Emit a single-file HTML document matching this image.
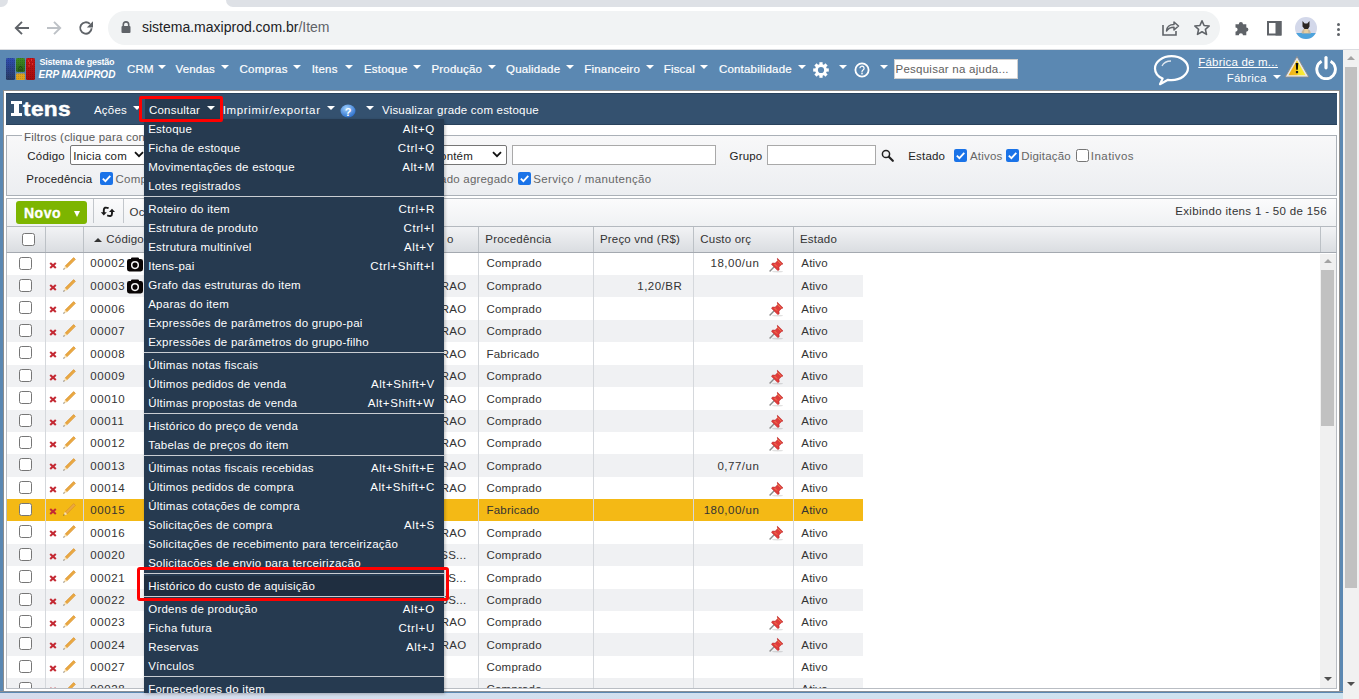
<!DOCTYPE html>
<html><head><meta charset="utf-8"><title>Itens</title>
<style>
html,body{margin:0;padding:0;width:1359px;height:699px;overflow:hidden;background:#fff;position:relative}
.t{position:absolute;white-space:nowrap;font-family:"Liberation Sans",sans-serif}
svg text{font-family:"Liberation Sans",sans-serif}
</style></head><body>
<div style="position:absolute;left:226px;top:0px;width:1133px;height:7px;background:#dee1e6;border-bottom-left-radius:8px"></div>
<div style="position:absolute;left:0px;top:0px;width:8px;height:7px;background:#dee1e6;border-bottom-right-radius:8px"></div>
<div style="position:absolute;left:0px;top:49px;width:1359px;height:1px;background:#dadce0"></div>
<svg style="position:absolute;left:13px;top:19px" width="18" height="18" viewBox="0 0 18 18"><path d="M16 9H3.5M9 2.8L2.8 9L9 15.2" fill="none" stroke="#5f6368" stroke-width="1.9"/></svg>
<svg style="position:absolute;left:45px;top:19px" width="18" height="18" viewBox="0 0 18 18"><path d="M2 9h12.5M9 2.8L15.2 9L9 15.2" fill="none" stroke="#bdc1c6" stroke-width="1.9"/></svg>
<svg style="position:absolute;left:77px;top:19px" width="18" height="18" viewBox="0 0 18 18"><path d="M14.6 9.3A5.7 5.7 0 1 1 12.9 4.9" fill="none" stroke="#5f6368" stroke-width="1.9"/><path d="M16 2.2v6.2h-6.2z" fill="#5f6368"/></svg>
<div style="position:absolute;left:108px;top:11px;width:1112px;height:34px;background:#f1f3f4;border-radius:17px"></div>
<svg style="position:absolute;left:121px;top:21px" width="10" height="12" viewBox="0 0 10 12"><rect x="0.5" y="5" width="9" height="7" rx="1" fill="#5f6368"/><path d="M2.3 5.5V3.6a2.7 2.7 0 0 1 5.4 0v1.9" fill="none" stroke="#5f6368" stroke-width="1.6"/></svg>
<div class="t" style="left:142px;top:18.5px;font-size:14px;line-height:17px;color:#202124">sistema.maxiprod.com.br<span style="color:#5f6368">/Item</span></div>
<svg style="position:absolute;left:1161px;top:19px" width="19" height="18" viewBox="0 0 19 18"><path d="M2 6v10h13v-4" fill="none" stroke="#5f6368" stroke-width="1.6"/><path d="M5.5 12c0-4 3-6.5 7.5-6.5V3l4.5 4-4.5 4V8.3c-3.5 0-5.8 1.2-7.5 3.7z" fill="none" stroke="#5f6368" stroke-width="1.5" stroke-linejoin="round"/></svg>
<svg style="position:absolute;left:1193px;top:19px" width="18" height="18" viewBox="0 0 18 18"><path d="M9 1.8l2.1 4.7 5.1.5-3.8 3.4 1.1 5-4.5-2.6-4.5 2.6 1.1-5L1.8 7l5.1-.5z" fill="none" stroke="#5f6368" stroke-width="1.6" stroke-linejoin="round"/></svg>
<svg style="position:absolute;left:1234px;top:20px" width="16" height="16" viewBox="0 0 16 16"><path d="M1.5 4.2h3.3a2.1 2.1 0 1 1 4.2 0h3.3v3.3a2.1 2.1 0 1 1 0 4.2v3.6H9a2.1 2.1 0 1 0-4.2 0H1.5v-3.6a2.1 2.1 0 1 0 0-4.2z" fill="#5f6368"/></svg>
<svg style="position:absolute;left:1266px;top:20px" width="16" height="16" viewBox="0 0 16 16"><rect x="2" y="2" width="12.5" height="12.5" fill="none" stroke="#5f6368" stroke-width="2"/><rect x="9.5" y="1" width="6" height="14.5" fill="#5f6368"/></svg>
<svg style="position:absolute;left:1295px;top:17px" width="22" height="22" viewBox="0 0 22 22"><defs><clipPath id="av"><circle cx="11" cy="11" r="11"/></clipPath></defs><g clip-path="url(#av)"><rect width="22" height="22" fill="#d3d8ea"/><rect y="16" width="22" height="6" fill="#4da3dc"/><path d="M6.5 15l2-3 3.5-.5 3 2 1 3H7z" fill="#c9b89a"/><path d="M7.5 4l2.2 2.6h2.6L14.5 4v5.5l-1.5 2.5h-3.5L7.5 9.5z" fill="#2a2522"/><path d="M9.5 12h3.3l.7 4H9z" fill="#e8cfa0"/></g></svg>
<div style="position:absolute;left:1337px;top:22.5px;width:3.2px;height:3.2px;background:#5f6368;border-radius:50%"></div>
<div style="position:absolute;left:1337px;top:27.5px;width:3.2px;height:3.2px;background:#5f6368;border-radius:50%"></div>
<div style="position:absolute;left:1337px;top:32.5px;width:3.2px;height:3.2px;background:#5f6368;border-radius:50%"></div>
<div style="position:absolute;left:0px;top:50px;width:1343px;height:649px;background:#5b88b2"></div>
<div style="position:absolute;left:1343px;top:50px;width:16px;height:649px;background:#f1f1f1"></div>
<div style="position:absolute;left:1345px;top:67px;width:12px;height:521px;background:#c1c1c1"></div>
<div style="position:absolute;left:1347px;top:56px;width:0;height:0;border-left:4px solid transparent;border-right:4px solid transparent;border-bottom:4px solid #a3a3a3"></div>
<div style="position:absolute;left:1347px;top:682px;width:0;height:0;border-left:4.0px solid transparent;border-right:4.0px solid transparent;border-top:4px solid #505050"></div>
<svg style="position:absolute;left:6px;top:58px" width="30" height="23" viewBox="0 0 30 23">
<defs><pattern id="dots" width="2" height="2" patternUnits="userSpaceOnUse"><rect width="1" height="1" fill="rgba(0,0,0,0.13)"/></pattern>
<linearGradient id="lb" x1="0" y1="0" x2="0" y2="1"><stop offset="0" stop-color="#2f4db2"/><stop offset="1" stop-color="#283b62"/></linearGradient>
<linearGradient id="lg" x1="0" y1="0" x2="0" y2="1"><stop offset="0" stop-color="#3f8c22"/><stop offset="1" stop-color="#2d6818"/></linearGradient>
<linearGradient id="lr" x1="0" y1="0" x2="0" y2="1"><stop offset="0" stop-color="#c41414"/><stop offset="1" stop-color="#a30d0d"/></linearGradient></defs>
<rect x="0" y="0" width="9" height="22" rx="1.5" fill="url(#lb)"/>
<rect x="10" y="0" width="9" height="14" rx="1.5" fill="url(#lg)"/>
<rect x="10" y="15.5" width="9" height="6.5" rx="1" fill="#dfa21c"/>
<rect x="20" y="0" width="9" height="22" rx="1.5" fill="url(#lr)"/>
<rect x="0" y="0" width="29" height="22" fill="url(#dots)"/>
<path d="M12.5 10.5l2-2.5 2 2.5M12 12h5" stroke="#1a3d12" stroke-width="0.9" fill="none"/>
<path d="M22 3h1M25 2h1M23 5h1M26 6h1M22.5 8h1" stroke="#ff5050" stroke-width="1"/>
</svg>
<div class="t" style="left:39.5px;top:57.18px;font-size:9px;line-height:11px;color:#fff;font-weight:bold;letter-spacing:-0.25px">Sistema de gestão</div>
<div class="t" style="left:38.5px;top:69.23px;font-size:10px;line-height:12px;color:#fff;font-weight:bold;font-style:italic">ERP MAXIPROD</div>
<div class="t" style="left:127px;top:63.02px;font-size:11.5px;line-height:13px;color:#fff;font-weight:normal;letter-spacing:0.2px;-webkit-text-stroke:0.2px #fff">CRM</div>
<div style="position:absolute;left:157.6px;top:65px;width:0;height:0;border-left:4.0px solid transparent;border-right:4.0px solid transparent;border-top:4.5px solid #fff"></div>
<div class="t" style="left:175.4px;top:63.02px;font-size:11.5px;line-height:13px;color:#fff;font-weight:normal;letter-spacing:0.2px;-webkit-text-stroke:0.2px #fff">Vendas</div>
<div style="position:absolute;left:221px;top:65px;width:0;height:0;border-left:4.0px solid transparent;border-right:4.0px solid transparent;border-top:4.5px solid #fff"></div>
<div class="t" style="left:239.6px;top:63.02px;font-size:11.5px;line-height:13px;color:#fff;font-weight:normal;letter-spacing:0.2px;-webkit-text-stroke:0.2px #fff">Compras</div>
<div style="position:absolute;left:293px;top:65px;width:0;height:0;border-left:4.0px solid transparent;border-right:4.0px solid transparent;border-top:4.5px solid #fff"></div>
<div class="t" style="left:311.7px;top:63.02px;font-size:11.5px;line-height:13px;color:#fff;font-weight:normal;letter-spacing:0.2px;-webkit-text-stroke:0.2px #fff">Itens</div>
<div style="position:absolute;left:345px;top:65px;width:0;height:0;border-left:4.0px solid transparent;border-right:4.0px solid transparent;border-top:4.5px solid #fff"></div>
<div class="t" style="left:364px;top:63.02px;font-size:11.5px;line-height:13px;color:#fff;font-weight:normal;letter-spacing:0.2px;-webkit-text-stroke:0.2px #fff">Estoque</div>
<div style="position:absolute;left:413px;top:65px;width:0;height:0;border-left:4.0px solid transparent;border-right:4.0px solid transparent;border-top:4.5px solid #fff"></div>
<div class="t" style="left:431.4px;top:63.02px;font-size:11.5px;line-height:13px;color:#fff;font-weight:normal;letter-spacing:0.2px;-webkit-text-stroke:0.2px #fff">Produção</div>
<div style="position:absolute;left:488px;top:65px;width:0;height:0;border-left:4.0px solid transparent;border-right:4.0px solid transparent;border-top:4.5px solid #fff"></div>
<div class="t" style="left:506px;top:63.02px;font-size:11.5px;line-height:13px;color:#fff;font-weight:normal;letter-spacing:0.2px;-webkit-text-stroke:0.2px #fff">Qualidade</div>
<div style="position:absolute;left:566px;top:65px;width:0;height:0;border-left:4.0px solid transparent;border-right:4.0px solid transparent;border-top:4.5px solid #fff"></div>
<div class="t" style="left:584.3px;top:63.02px;font-size:11.5px;line-height:13px;color:#fff;font-weight:normal;letter-spacing:0.2px;-webkit-text-stroke:0.2px #fff">Financeiro</div>
<div style="position:absolute;left:646px;top:65px;width:0;height:0;border-left:4.0px solid transparent;border-right:4.0px solid transparent;border-top:4.5px solid #fff"></div>
<div class="t" style="left:663.7px;top:63.02px;font-size:11.5px;line-height:13px;color:#fff;font-weight:normal;letter-spacing:0.2px;-webkit-text-stroke:0.2px #fff">Fiscal</div>
<div style="position:absolute;left:700px;top:65px;width:0;height:0;border-left:4.0px solid transparent;border-right:4.0px solid transparent;border-top:4.5px solid #fff"></div>
<div class="t" style="left:718.9px;top:63.02px;font-size:11.5px;line-height:13px;color:#fff;font-weight:normal;letter-spacing:0.2px;-webkit-text-stroke:0.2px #fff">Contabilidade</div>
<div style="position:absolute;left:797.6px;top:65px;width:0;height:0;border-left:4.0px solid transparent;border-right:4.0px solid transparent;border-top:4.5px solid #fff"></div>
<svg style="position:absolute;left:813px;top:62px" width="16" height="16" viewBox="0 0 16 16"><g fill="#fff"><circle cx="8" cy="8" r="5.9"/><rect x="6.4" y="0.2" width="3.2" height="3" transform="rotate(0 8 8)"/><rect x="6.4" y="0.2" width="3.2" height="3" transform="rotate(45 8 8)"/><rect x="6.4" y="0.2" width="3.2" height="3" transform="rotate(90 8 8)"/><rect x="6.4" y="0.2" width="3.2" height="3" transform="rotate(135 8 8)"/><rect x="6.4" y="0.2" width="3.2" height="3" transform="rotate(180 8 8)"/><rect x="6.4" y="0.2" width="3.2" height="3" transform="rotate(225 8 8)"/><rect x="6.4" y="0.2" width="3.2" height="3" transform="rotate(270 8 8)"/><rect x="6.4" y="0.2" width="3.2" height="3" transform="rotate(315 8 8)"/></g><circle cx="8" cy="8" r="3.1" fill="#5b88b2"/></svg>
<div style="position:absolute;left:839px;top:65px;width:0;height:0;border-left:4.0px solid transparent;border-right:4.0px solid transparent;border-top:4.5px solid #fff"></div>
<svg style="position:absolute;left:854px;top:62px" width="16" height="16" viewBox="0 0 16 16"><circle cx="8" cy="8" r="6.6" fill="none" stroke="#fff" stroke-width="1.8"/><path d="M5.9 6.2a2.1 2.1 0 1 1 3.2 1.8c-.8.5-1.1.9-1.1 1.8v.6" fill="none" stroke="#fff" stroke-width="1.2"/><rect x="7.3" y="11" width="1.4" height="1.4" fill="#fff"/></svg>
<div style="position:absolute;left:880px;top:65px;width:0;height:0;border-left:4.0px solid transparent;border-right:4.0px solid transparent;border-top:4.5px solid #fff"></div>
<div style="position:absolute;left:893.5px;top:59px;width:124.5px;height:19.5px;background:#fff;border:1px solid #d0d0d0;box-sizing:border-box"></div>
<div class="t" style="left:895.5px;top:63.02px;font-size:11.5px;line-height:13px;color:#5e5e5e;font-weight:normal;letter-spacing:0.2px;letter-spacing:0.25px">Pesquisar na ajuda...</div>
<svg style="position:absolute;left:1153px;top:54px" width="37" height="32" viewBox="0 0 37 32"><path d="M18.5 2.2C9.2 2.2 2 7.8 2 14.4c0 4.3 3 8 7.6 10.2L7 30.2l8-4.4c1.1.2 2.3.3 3.5.3C27.8 26.1 35 20.5 35 14.1S27.8 2.2 18.5 2.2z" fill="none" stroke="#fff" stroke-width="2.2" stroke-linejoin="round"/><path d="M9 12c1.5-3 5-5 9-5" fill="none" stroke="#fff" stroke-width="1.3" opacity="0.8"/></svg>
<div class="t" style="left:1198.3px;top:56.02px;font-size:11.5px;line-height:13px;color:#fff;font-weight:normal;letter-spacing:0.2px;text-decoration:underline">Fábrica de m...</div>
<div class="t" style="left:1226.8px;top:72.22px;font-size:11.5px;line-height:13px;color:#fff;font-weight:normal;letter-spacing:0.2px;">Fábrica</div>
<div style="position:absolute;left:1272.5px;top:74.5px;width:0;height:0;border-left:4.0px solid transparent;border-right:4.0px solid transparent;border-top:4.5px solid #fff"></div>
<svg style="position:absolute;left:1284px;top:55px" width="26" height="24" viewBox="0 0 26 24"><defs><linearGradient id="wg" x1="0" x2="1" y1="0" y2="0"><stop offset="0" stop-color="#efae14"/><stop offset="0.5" stop-color="#f4c21c"/><stop offset="0.55" stop-color="#f8e22a"/><stop offset="1" stop-color="#fbee3a"/></linearGradient></defs><path d="M13 1.6L24.8 22H1.2z" fill="#e9e9e9" stroke="#8a8a8a" stroke-width="0.9" stroke-linejoin="round"/><path d="M13 5.2L21.6 20.3H4.4z" fill="url(#wg)"/><path d="M11.7 8h2.6l-.5 6.8h-1.6z" fill="#0a0a0a"/><rect x="11.9" y="16" width="2.2" height="2.2" fill="#1a1a1a"/></svg>
<svg style="position:absolute;left:1314px;top:55px" width="24" height="25" viewBox="0 0 24 25"><path d="M7.6 6.3A9.3 9.3 0 1 0 16.6 6.3" fill="none" stroke="#fff" stroke-width="2.9"/><path d="M12 2.6v10.2" stroke="#fff" stroke-width="3.2" stroke-linecap="round"/></svg>
<div style="position:absolute;left:3px;top:90px;width:1337px;height:603px;background:#fff;border:1px solid #8d8d8d;box-sizing:border-box"></div>
<div style="position:absolute;left:6px;top:93px;width:1331px;height:32px;background:#34516f;border-top:1px solid #29425c;border-bottom:1px solid #29425c;box-sizing:border-box"></div>
<div style="position:absolute;left:11.2px;top:101px;width:10.6px;height:3px;background:#fff"></div>
<div style="position:absolute;left:14.2px;top:101px;width:4.6px;height:15px;background:#fff"></div>
<div style="position:absolute;left:11.2px;top:113px;width:10.6px;height:3px;background:#fff"></div>
<div class="t" style="left:22.8px;top:97px;font-size:21px;line-height:24px;color:#fff;font-weight:bold;transform:scaleX(1.08);transform-origin:0 0;-webkit-text-stroke:0.45px #fff;letter-spacing:0.3px">tens</div>
<div class="t" style="left:94px;top:103.82px;font-size:11.5px;line-height:13px;color:#fff;font-weight:normal;letter-spacing:0.2px;">Ações</div>
<div style="position:absolute;left:133px;top:106.2px;width:0;height:0;border-left:4.0px solid transparent;border-right:4.0px solid transparent;border-top:4.5px solid #fff"></div>
<div style="position:absolute;left:145px;top:99px;width:75px;height:20px;background:#263a50"></div>
<div class="t" style="left:149px;top:103.82px;font-size:11.5px;line-height:13px;color:#fff;font-weight:normal;letter-spacing:0.2px;">Consultar</div>
<div style="position:absolute;left:207px;top:106.2px;width:0;height:0;border-left:4.0px solid transparent;border-right:4.0px solid transparent;border-top:4.5px solid #fff"></div>
<div class="t" style="left:222.7px;top:103.82px;font-size:11.5px;line-height:13px;color:#fff;font-weight:normal;letter-spacing:0.2px;letter-spacing:0.65px">Imprimir/exportar</div>
<div style="position:absolute;left:326.7px;top:106.2px;width:0;height:0;border-left:4.0px solid transparent;border-right:4.0px solid transparent;border-top:4.5px solid #fff"></div>
<svg style="position:absolute;left:340px;top:104px" width="16" height="14" viewBox="0 0 16 14"><defs><radialGradient id="hg" cx="0.4" cy="0.3" r="0.8"><stop offset="0" stop-color="#9fd0ff"/><stop offset="1" stop-color="#1d62c4"/></radialGradient></defs><ellipse cx="8" cy="7" rx="7.5" ry="6.5" fill="url(#hg)"/><text x="8" y="11.5" text-anchor="middle" font-family="Liberation Sans" font-size="11" font-weight="bold" fill="#fff">?</text></svg>
<div style="position:absolute;left:365.7px;top:106.2px;width:0;height:0;border-left:4.0px solid transparent;border-right:4.0px solid transparent;border-top:4.5px solid #fff"></div>
<div class="t" style="left:382px;top:103.82px;font-size:11.5px;line-height:13px;color:#fff;font-weight:normal;letter-spacing:0.2px;">Visualizar grade com estoque</div>
<div style="position:absolute;left:6px;top:135px;width:1331px;height:61px;border:1px solid #aab0b7;box-sizing:border-box;background:linear-gradient(#f8f8f9,#eceef1)"></div>
<div style="position:absolute;left:22px;top:130px;width:124px;height:5px;background:#fff"></div>
<div style="position:absolute;left:22px;top:135px;width:124px;height:4px;background:#f8f8f9"></div>
<div class="t" style="left:24px;top:131.02px;font-size:11.5px;line-height:13px;color:#5a5a5a;font-weight:normal;letter-spacing:0.2px;">Filtros (clique para con</div>
<div class="t" style="left:27.3px;top:150.32px;font-size:11.5px;line-height:13px;color:#222;font-weight:normal;letter-spacing:0.2px;">Código</div>
<div style="position:absolute;left:69.5px;top:145px;width:80px;height:19.5px;background:#fff;border:1px solid #767676;border-radius:2px;box-sizing:border-box"></div>
<div class="t" style="left:73.2px;top:149.82px;font-size:11.5px;line-height:13px;color:#222;font-weight:normal;letter-spacing:0.2px;">Inicia com</div>
<svg style="position:absolute;left:134px;top:151px" width="10" height="7" viewBox="0 0 10 7"><path d="M1 1.2l4 4 4-4" fill="none" stroke="#111" stroke-width="1.8"/></svg>
<div class="t" style="left:26.3px;top:172.72px;font-size:11.5px;line-height:13px;color:#222;font-weight:normal;letter-spacing:0.2px;">Procedência</div>
<svg style="position:absolute;left:100px;top:172px" width="13" height="13" viewBox="0 0 13 13"><rect x="0" y="0" width="13" height="13" rx="2" fill="#1a73e8"/><path d="M2.8 6.6l2.6 2.6 4.9-5.4" fill="none" stroke="#fff" stroke-width="1.8"/></svg>
<div class="t" style="left:115.6px;top:172.72px;font-size:11.5px;line-height:13px;color:#666;font-weight:normal;letter-spacing:0.2px;">Comp</div>
<div style="position:absolute;left:420px;top:145px;width:86.5px;height:19.5px;background:#fff;border:1px solid #767676;border-radius:2px;box-sizing:border-box"></div>
<div class="t" style="left:473px;transform:translateX(-100%);top:149.82px;font-size:11.5px;line-height:13px;color:#222;font-weight:normal;letter-spacing:0.2px;">Contém</div>
<svg style="position:absolute;left:492px;top:151px" width="10" height="7" viewBox="0 0 10 7"><path d="M1 1.2l4 4 4-4" fill="none" stroke="#111" stroke-width="1.8"/></svg>
<div style="position:absolute;left:512px;top:145px;width:204px;height:19.5px;background:#fff;border:1px solid #a9a9a9;box-sizing:border-box"></div>
<div class="t" style="left:729.5px;top:150.32px;font-size:11.5px;line-height:13px;color:#222;font-weight:normal;letter-spacing:0.2px;">Grupo</div>
<div style="position:absolute;left:766.8px;top:145px;width:109px;height:19.5px;background:#fff;border:1px solid #a9a9a9;box-sizing:border-box"></div>
<svg style="position:absolute;left:881px;top:148.5px" width="13" height="13" viewBox="0 0 13 13"><circle cx="5" cy="5" r="3.6" fill="none" stroke="#222" stroke-width="1.5"/><path d="M7.8 7.8l4 4" stroke="#222" stroke-width="2.2" stroke-linecap="round"/></svg>
<div class="t" style="left:908.2px;top:150.32px;font-size:11.5px;line-height:13px;color:#222;font-weight:normal;letter-spacing:0.2px;">Estado</div>
<svg style="position:absolute;left:954px;top:149px" width="13" height="13" viewBox="0 0 13 13"><rect x="0" y="0" width="13" height="13" rx="2" fill="#1a73e8"/><path d="M2.8 6.6l2.6 2.6 4.9-5.4" fill="none" stroke="#fff" stroke-width="1.8"/></svg>
<div class="t" style="left:970px;top:150.32px;font-size:11.5px;line-height:13px;color:#666;font-weight:normal;letter-spacing:0.2px;">Ativos</div>
<svg style="position:absolute;left:1006.4px;top:149px" width="13" height="13" viewBox="0 0 13 13"><rect x="0" y="0" width="13" height="13" rx="2" fill="#1a73e8"/><path d="M2.8 6.6l2.6 2.6 4.9-5.4" fill="none" stroke="#fff" stroke-width="1.8"/></svg>
<div class="t" style="left:1021.2px;top:150.32px;font-size:11.5px;line-height:13px;color:#666;font-weight:normal;letter-spacing:0.2px;">Digitação</div>
<svg style="position:absolute;left:1076px;top:149px" width="13" height="13" viewBox="0 0 13 13"><rect x="0.5" y="0.5" width="12" height="12" rx="2" fill="#fff" stroke="#767676" stroke-width="1"/></svg>
<div class="t" style="left:1090.8px;top:150.32px;font-size:11.5px;line-height:13px;color:#666;font-weight:normal;letter-spacing:0.2px;letter-spacing:0.45px">Inativos</div>
<div class="t" style="left:513.5px;transform:translateX(-100%);top:172.72px;font-size:11.5px;line-height:13px;color:#666;font-weight:normal;letter-spacing:0.2px;">Fabricado agregado</div>
<svg style="position:absolute;left:517.7px;top:172px" width="13" height="13" viewBox="0 0 13 13"><rect x="0" y="0" width="13" height="13" rx="2" fill="#1a73e8"/><path d="M2.8 6.6l2.6 2.6 4.9-5.4" fill="none" stroke="#fff" stroke-width="1.8"/></svg>
<div class="t" style="left:533.3px;top:172.72px;font-size:11.5px;line-height:13px;color:#666;font-weight:normal;letter-spacing:0.2px;letter-spacing:0.35px">Serviço / manutenção</div>
<div style="position:absolute;left:6px;top:198px;width:1331px;height:29px;border:1px solid #b3b8be;border-bottom:none;box-sizing:border-box;background:linear-gradient(#fbfbfc,#eff1f3)"></div>
<div style="position:absolute;left:16px;top:201px;width:71px;height:23px;background:#7db500;border-radius:3px"></div>
<div class="t" style="left:24px;top:205.45px;font-size:14px;line-height:16px;color:#fff;font-weight:bold;letter-spacing:0.5px;-webkit-text-stroke:0.35px #fff">Novo</div>
<div style="position:absolute;left:74px;top:211px;width:0;height:0;border-left:3.2px solid transparent;border-right:3.2px solid transparent;border-top:6px solid #fff"></div>
<div style="position:absolute;left:93px;top:199px;width:1px;height:24px;background:#c3c7cc"></div>
<div style="position:absolute;left:123px;top:199px;width:1px;height:24px;background:#c3c7cc"></div>
<svg style="position:absolute;left:96px;top:202px" width="24" height="20" viewBox="0 0 24 20"><path d="M12.6 6.2C9.5 5 7.8 5.6 7.8 8v3.2" fill="none" stroke="#1a1a1a" stroke-width="1.9"/><path d="M4.8 10.3h6l-3 3.2z" fill="#1a1a1a"/><path d="M11.2 13.4c3.1 1.2 4.8.6 4.8-1.8V8.8" fill="none" stroke="#1a1a1a" stroke-width="1.9"/><path d="M13 9.9h6l-3-3.2z" fill="#1a1a1a"/></svg>
<div class="t" style="left:129.6px;top:205.52px;font-size:11.5px;line-height:13px;color:#333;font-weight:normal;letter-spacing:0.2px;">Oc</div>
<div class="t" style="left:1327px;transform:translateX(-100%);top:204.62px;font-size:11.5px;line-height:13px;color:#333;font-weight:normal;letter-spacing:0.2px;letter-spacing:0.33px">Exibindo itens 1 - 50 de 156</div>
<div style="position:absolute;left:6px;top:226px;width:1331px;height:27px;border:1px solid #b4b9bf;border-bottom-color:#a4a9b0;box-sizing:border-box;background:linear-gradient(#f2f3f5,#dadde1)"></div>
<div style="position:absolute;left:45px;top:227px;width:1px;height:25px;background:#bcc1c6"></div>
<div style="position:absolute;left:83px;top:227px;width:1px;height:25px;background:#bcc1c6"></div>
<div style="position:absolute;left:478px;top:227px;width:1px;height:25px;background:#bcc1c6"></div>
<div style="position:absolute;left:593px;top:227px;width:1px;height:25px;background:#bcc1c6"></div>
<div style="position:absolute;left:693px;top:227px;width:1px;height:25px;background:#bcc1c6"></div>
<div style="position:absolute;left:793px;top:227px;width:1px;height:25px;background:#bcc1c6"></div>
<div style="position:absolute;left:1320px;top:227px;width:1px;height:25px;background:#bcc1c6"></div>
<svg style="position:absolute;left:22px;top:233px" width="13" height="13" viewBox="0 0 13 13"><rect x="0.5" y="0.5" width="12" height="12" rx="2" fill="#fff" stroke="#767676"/></svg>
<div style="position:absolute;left:94px;top:237.5px;width:0;height:0;border-left:4.2px solid transparent;border-right:4.2px solid transparent;border-bottom:4.5px solid #333"></div>
<div class="t" style="left:106.3px;top:233.42px;font-size:11.5px;line-height:13px;color:#333;font-weight:normal;letter-spacing:0.2px;">Código</div>
<div class="t" style="left:453.5px;transform:translateX(-100%);top:232.92px;font-size:11.5px;line-height:13px;color:#333;font-weight:normal;letter-spacing:0.2px;">o</div>
<div class="t" style="left:485.3px;top:232.92px;font-size:11.5px;line-height:13px;color:#333;font-weight:normal;letter-spacing:0.2px;">Procedência</div>
<div class="t" style="left:599.9px;top:232.92px;font-size:11.5px;line-height:13px;color:#333;font-weight:normal;letter-spacing:0.2px;">Preço vnd (R$)</div>
<div class="t" style="left:700.3px;top:232.92px;font-size:11.5px;line-height:13px;color:#333;font-weight:normal;letter-spacing:0.2px;">Custo orç</div>
<div class="t" style="left:800px;top:232.92px;font-size:11.5px;line-height:13px;color:#333;font-weight:normal;letter-spacing:0.2px;">Estado</div>
<div style="position:absolute;left:6px;top:253px;width:1331px;height:436px;border:1px solid #b9bdc3;border-top:none;box-sizing:border-box;background:#fff;overflow:hidden" id="gb">
<svg style="position:absolute;left:12px;top:4.00px" width="13" height="13" viewBox="0 0 13 13"><rect x="0.5" y="0.5" width="12" height="12" rx="2" fill="#fff" stroke="#767676"/></svg>
<svg style="position:absolute;left:42px;top:8.60px" width="8" height="7" viewBox="0 0 8 7"><path d="M1.2 1l5.6 5M6.8 1L1.2 6" stroke="#c42a34" stroke-width="2.1"/></svg>
<svg style="position:absolute;left:54px;top:3.50px" width="15" height="15" viewBox="0 0 15 15"><g transform="rotate(-45 7.5 7.5)"><rect x="4" y="6.25" width="12" height="2.5" fill="#eba941" stroke="#d58b26" stroke-width="0.6"/><path d="M4 5.8L0.6 7.5 4 9.2z" fill="#fbe2b0"/><path d="M1.6 6.9L0.2 7.5 1.6 8.1z" fill="#222"/></g></svg>
<div class="t" style="left:83.2px;top:4.02px;font-size:11.5px;line-height:13px;color:#333;font-weight:normal;letter-spacing:0.2px;letter-spacing:0.65px">00002</div>
<svg style="position:absolute;left:120px;top:3.60px" width="16" height="15" viewBox="0 0 16 15"><path d="M5.2 0.4h5.6a1.2 1.2 0 0 1 1.2 1.2V3H4V1.6a1.2 1.2 0 0 1 1.2-1.2z" fill="#080404"/><rect x="0" y="1.9" width="16" height="12.5" rx="2.3" fill="#080404"/><circle cx="8" cy="8.1" r="3.3" fill="none" stroke="#f4f4f4" stroke-width="1.5"/></svg>
<div class="t" style="left:479.5px;top:4.02px;font-size:11.5px;line-height:13px;color:#333;font-weight:normal;letter-spacing:0.2px;">Comprado</div>
<div class="t" style="left:752.3px;transform:translateX(-100%);top:4.02px;font-size:11.5px;line-height:13px;color:#333;font-weight:normal;letter-spacing:0.2px;letter-spacing:0.5px">18,00/un</div>
<svg style="position:absolute;left:761px;top:3.50px" width="17" height="16" viewBox="0 0 17 16"><ellipse cx="9.5" cy="14.6" rx="5.5" ry="0.9" fill="rgba(0,0,0,0.12)"/><path d="M1.6 14.4l4.6-4.6" stroke="#8a8a8a" stroke-width="1.4"/><path d="M9.4 1.3l5.6 5.6-1.5.7-2.6 2.5.3 2.6-1.4.9L3.6 7.4l.9-1.4 2.6.3L9.6 3.7z" fill="#e23c3c" stroke="#b82424" stroke-width="0.6"/><path d="M9.3 3.2l3.6 3.6M6.5 7l2.6 2.6" stroke="#f0c060" stroke-width="0.7" opacity="0.8"/></svg>
<div class="t" style="left:794.3px;top:4.02px;font-size:11.5px;line-height:13px;color:#333;font-weight:normal;letter-spacing:0.2px;">Ativo</div>
<div style="position:absolute;left:0px;top:22px;width:856px;height:22px;background:#f0f1f3"></div>
<svg style="position:absolute;left:12px;top:26.00px" width="13" height="13" viewBox="0 0 13 13"><rect x="0.5" y="0.5" width="12" height="12" rx="2" fill="#fff" stroke="#767676"/></svg>
<svg style="position:absolute;left:42px;top:30.60px" width="8" height="7" viewBox="0 0 8 7"><path d="M1.2 1l5.6 5M6.8 1L1.2 6" stroke="#c42a34" stroke-width="2.1"/></svg>
<svg style="position:absolute;left:54px;top:25.50px" width="15" height="15" viewBox="0 0 15 15"><g transform="rotate(-45 7.5 7.5)"><rect x="4" y="6.25" width="12" height="2.5" fill="#eba941" stroke="#d58b26" stroke-width="0.6"/><path d="M4 5.8L0.6 7.5 4 9.2z" fill="#fbe2b0"/><path d="M1.6 6.9L0.2 7.5 1.6 8.1z" fill="#222"/></g></svg>
<div class="t" style="left:83.2px;top:27.02px;font-size:11.5px;line-height:13px;color:#333;font-weight:normal;letter-spacing:0.2px;letter-spacing:0.65px">00003</div>
<svg style="position:absolute;left:120px;top:25.60px" width="16" height="15" viewBox="0 0 16 15"><path d="M5.2 0.4h5.6a1.2 1.2 0 0 1 1.2 1.2V3H4V1.6a1.2 1.2 0 0 1 1.2-1.2z" fill="#080404"/><rect x="0" y="1.9" width="16" height="12.5" rx="2.3" fill="#080404"/><circle cx="8" cy="8.1" r="3.3" fill="none" stroke="#f4f4f4" stroke-width="1.5"/></svg>
<div class="t" style="left:459.3px;transform:translateX(-100%);top:27.02px;font-size:11.5px;line-height:13px;color:#333;font-weight:normal;letter-spacing:0.2px;">RAO</div>
<div class="t" style="left:479.5px;top:27.02px;font-size:11.5px;line-height:13px;color:#333;font-weight:normal;letter-spacing:0.2px;">Comprado</div>
<div class="t" style="left:675.3px;transform:translateX(-100%);top:27.02px;font-size:11.5px;line-height:13px;color:#333;font-weight:normal;letter-spacing:0.2px;letter-spacing:0.5px">1,20/BR</div>
<div class="t" style="left:794.3px;top:27.02px;font-size:11.5px;line-height:13px;color:#333;font-weight:normal;letter-spacing:0.2px;">Ativo</div>
<svg style="position:absolute;left:12px;top:48.00px" width="13" height="13" viewBox="0 0 13 13"><rect x="0.5" y="0.5" width="12" height="12" rx="2" fill="#fff" stroke="#767676"/></svg>
<svg style="position:absolute;left:42px;top:52.60px" width="8" height="7" viewBox="0 0 8 7"><path d="M1.2 1l5.6 5M6.8 1L1.2 6" stroke="#c42a34" stroke-width="2.1"/></svg>
<svg style="position:absolute;left:54px;top:47.50px" width="15" height="15" viewBox="0 0 15 15"><g transform="rotate(-45 7.5 7.5)"><rect x="4" y="6.25" width="12" height="2.5" fill="#eba941" stroke="#d58b26" stroke-width="0.6"/><path d="M4 5.8L0.6 7.5 4 9.2z" fill="#fbe2b0"/><path d="M1.6 6.9L0.2 7.5 1.6 8.1z" fill="#222"/></g></svg>
<div class="t" style="left:83.2px;top:50.02px;font-size:11.5px;line-height:13px;color:#333;font-weight:normal;letter-spacing:0.2px;letter-spacing:0.65px">00006</div>
<div class="t" style="left:459.3px;transform:translateX(-100%);top:50.02px;font-size:11.5px;line-height:13px;color:#333;font-weight:normal;letter-spacing:0.2px;">RAO</div>
<div class="t" style="left:479.5px;top:50.02px;font-size:11.5px;line-height:13px;color:#333;font-weight:normal;letter-spacing:0.2px;">Comprado</div>
<svg style="position:absolute;left:761px;top:47.50px" width="17" height="16" viewBox="0 0 17 16"><ellipse cx="9.5" cy="14.6" rx="5.5" ry="0.9" fill="rgba(0,0,0,0.12)"/><path d="M1.6 14.4l4.6-4.6" stroke="#8a8a8a" stroke-width="1.4"/><path d="M9.4 1.3l5.6 5.6-1.5.7-2.6 2.5.3 2.6-1.4.9L3.6 7.4l.9-1.4 2.6.3L9.6 3.7z" fill="#e23c3c" stroke="#b82424" stroke-width="0.6"/><path d="M9.3 3.2l3.6 3.6M6.5 7l2.6 2.6" stroke="#f0c060" stroke-width="0.7" opacity="0.8"/></svg>
<div class="t" style="left:794.3px;top:50.02px;font-size:11.5px;line-height:13px;color:#333;font-weight:normal;letter-spacing:0.2px;">Ativo</div>
<div style="position:absolute;left:0px;top:67px;width:856px;height:22px;background:#f0f1f3"></div>
<svg style="position:absolute;left:12px;top:71.00px" width="13" height="13" viewBox="0 0 13 13"><rect x="0.5" y="0.5" width="12" height="12" rx="2" fill="#fff" stroke="#767676"/></svg>
<svg style="position:absolute;left:42px;top:75.60px" width="8" height="7" viewBox="0 0 8 7"><path d="M1.2 1l5.6 5M6.8 1L1.2 6" stroke="#c42a34" stroke-width="2.1"/></svg>
<svg style="position:absolute;left:54px;top:70.50px" width="15" height="15" viewBox="0 0 15 15"><g transform="rotate(-45 7.5 7.5)"><rect x="4" y="6.25" width="12" height="2.5" fill="#eba941" stroke="#d58b26" stroke-width="0.6"/><path d="M4 5.8L0.6 7.5 4 9.2z" fill="#fbe2b0"/><path d="M1.6 6.9L0.2 7.5 1.6 8.1z" fill="#222"/></g></svg>
<div class="t" style="left:83.2px;top:72.39px;font-size:11.5px;line-height:13px;color:#333;font-weight:normal;letter-spacing:0.2px;letter-spacing:0.65px">00007</div>
<div class="t" style="left:459.3px;transform:translateX(-100%);top:72.39px;font-size:11.5px;line-height:13px;color:#333;font-weight:normal;letter-spacing:0.2px;">RAO</div>
<div class="t" style="left:479.5px;top:72.39px;font-size:11.5px;line-height:13px;color:#333;font-weight:normal;letter-spacing:0.2px;">Comprado</div>
<svg style="position:absolute;left:761px;top:70.50px" width="17" height="16" viewBox="0 0 17 16"><ellipse cx="9.5" cy="14.6" rx="5.5" ry="0.9" fill="rgba(0,0,0,0.12)"/><path d="M1.6 14.4l4.6-4.6" stroke="#8a8a8a" stroke-width="1.4"/><path d="M9.4 1.3l5.6 5.6-1.5.7-2.6 2.5.3 2.6-1.4.9L3.6 7.4l.9-1.4 2.6.3L9.6 3.7z" fill="#e23c3c" stroke="#b82424" stroke-width="0.6"/><path d="M9.3 3.2l3.6 3.6M6.5 7l2.6 2.6" stroke="#f0c060" stroke-width="0.7" opacity="0.8"/></svg>
<div class="t" style="left:794.3px;top:72.39px;font-size:11.5px;line-height:13px;color:#333;font-weight:normal;letter-spacing:0.2px;">Ativo</div>
<svg style="position:absolute;left:12px;top:93.00px" width="13" height="13" viewBox="0 0 13 13"><rect x="0.5" y="0.5" width="12" height="12" rx="2" fill="#fff" stroke="#767676"/></svg>
<svg style="position:absolute;left:42px;top:97.60px" width="8" height="7" viewBox="0 0 8 7"><path d="M1.2 1l5.6 5M6.8 1L1.2 6" stroke="#c42a34" stroke-width="2.1"/></svg>
<svg style="position:absolute;left:54px;top:92.50px" width="15" height="15" viewBox="0 0 15 15"><g transform="rotate(-45 7.5 7.5)"><rect x="4" y="6.25" width="12" height="2.5" fill="#eba941" stroke="#d58b26" stroke-width="0.6"/><path d="M4 5.8L0.6 7.5 4 9.2z" fill="#fbe2b0"/><path d="M1.6 6.9L0.2 7.5 1.6 8.1z" fill="#222"/></g></svg>
<div class="t" style="left:83.2px;top:94.77px;font-size:11.5px;line-height:13px;color:#333;font-weight:normal;letter-spacing:0.2px;letter-spacing:0.65px">00008</div>
<div class="t" style="left:459.3px;transform:translateX(-100%);top:94.77px;font-size:11.5px;line-height:13px;color:#333;font-weight:normal;letter-spacing:0.2px;">RAO</div>
<div class="t" style="left:479.5px;top:94.77px;font-size:11.5px;line-height:13px;color:#333;font-weight:normal;letter-spacing:0.2px;">Fabricado</div>
<div class="t" style="left:794.3px;top:94.77px;font-size:11.5px;line-height:13px;color:#333;font-weight:normal;letter-spacing:0.2px;">Ativo</div>
<div style="position:absolute;left:0px;top:112px;width:856px;height:22px;background:#f0f1f3"></div>
<svg style="position:absolute;left:12px;top:116.00px" width="13" height="13" viewBox="0 0 13 13"><rect x="0.5" y="0.5" width="12" height="12" rx="2" fill="#fff" stroke="#767676"/></svg>
<svg style="position:absolute;left:42px;top:120.60px" width="8" height="7" viewBox="0 0 8 7"><path d="M1.2 1l5.6 5M6.8 1L1.2 6" stroke="#c42a34" stroke-width="2.1"/></svg>
<svg style="position:absolute;left:54px;top:115.50px" width="15" height="15" viewBox="0 0 15 15"><g transform="rotate(-45 7.5 7.5)"><rect x="4" y="6.25" width="12" height="2.5" fill="#eba941" stroke="#d58b26" stroke-width="0.6"/><path d="M4 5.8L0.6 7.5 4 9.2z" fill="#fbe2b0"/><path d="M1.6 6.9L0.2 7.5 1.6 8.1z" fill="#222"/></g></svg>
<div class="t" style="left:83.2px;top:117.14px;font-size:11.5px;line-height:13px;color:#333;font-weight:normal;letter-spacing:0.2px;letter-spacing:0.65px">00009</div>
<div class="t" style="left:459.3px;transform:translateX(-100%);top:117.14px;font-size:11.5px;line-height:13px;color:#333;font-weight:normal;letter-spacing:0.2px;">RAO</div>
<div class="t" style="left:479.5px;top:117.14px;font-size:11.5px;line-height:13px;color:#333;font-weight:normal;letter-spacing:0.2px;">Comprado</div>
<svg style="position:absolute;left:761px;top:115.50px" width="17" height="16" viewBox="0 0 17 16"><ellipse cx="9.5" cy="14.6" rx="5.5" ry="0.9" fill="rgba(0,0,0,0.12)"/><path d="M1.6 14.4l4.6-4.6" stroke="#8a8a8a" stroke-width="1.4"/><path d="M9.4 1.3l5.6 5.6-1.5.7-2.6 2.5.3 2.6-1.4.9L3.6 7.4l.9-1.4 2.6.3L9.6 3.7z" fill="#e23c3c" stroke="#b82424" stroke-width="0.6"/><path d="M9.3 3.2l3.6 3.6M6.5 7l2.6 2.6" stroke="#f0c060" stroke-width="0.7" opacity="0.8"/></svg>
<div class="t" style="left:794.3px;top:117.14px;font-size:11.5px;line-height:13px;color:#333;font-weight:normal;letter-spacing:0.2px;">Ativo</div>
<svg style="position:absolute;left:12px;top:138.00px" width="13" height="13" viewBox="0 0 13 13"><rect x="0.5" y="0.5" width="12" height="12" rx="2" fill="#fff" stroke="#767676"/></svg>
<svg style="position:absolute;left:42px;top:142.60px" width="8" height="7" viewBox="0 0 8 7"><path d="M1.2 1l5.6 5M6.8 1L1.2 6" stroke="#c42a34" stroke-width="2.1"/></svg>
<svg style="position:absolute;left:54px;top:137.50px" width="15" height="15" viewBox="0 0 15 15"><g transform="rotate(-45 7.5 7.5)"><rect x="4" y="6.25" width="12" height="2.5" fill="#eba941" stroke="#d58b26" stroke-width="0.6"/><path d="M4 5.8L0.6 7.5 4 9.2z" fill="#fbe2b0"/><path d="M1.6 6.9L0.2 7.5 1.6 8.1z" fill="#222"/></g></svg>
<div class="t" style="left:83.2px;top:139.52px;font-size:11.5px;line-height:13px;color:#333;font-weight:normal;letter-spacing:0.2px;letter-spacing:0.65px">00010</div>
<div class="t" style="left:459.3px;transform:translateX(-100%);top:139.52px;font-size:11.5px;line-height:13px;color:#333;font-weight:normal;letter-spacing:0.2px;">RAO</div>
<div class="t" style="left:479.5px;top:139.52px;font-size:11.5px;line-height:13px;color:#333;font-weight:normal;letter-spacing:0.2px;">Comprado</div>
<svg style="position:absolute;left:761px;top:137.50px" width="17" height="16" viewBox="0 0 17 16"><ellipse cx="9.5" cy="14.6" rx="5.5" ry="0.9" fill="rgba(0,0,0,0.12)"/><path d="M1.6 14.4l4.6-4.6" stroke="#8a8a8a" stroke-width="1.4"/><path d="M9.4 1.3l5.6 5.6-1.5.7-2.6 2.5.3 2.6-1.4.9L3.6 7.4l.9-1.4 2.6.3L9.6 3.7z" fill="#e23c3c" stroke="#b82424" stroke-width="0.6"/><path d="M9.3 3.2l3.6 3.6M6.5 7l2.6 2.6" stroke="#f0c060" stroke-width="0.7" opacity="0.8"/></svg>
<div class="t" style="left:794.3px;top:139.52px;font-size:11.5px;line-height:13px;color:#333;font-weight:normal;letter-spacing:0.2px;">Ativo</div>
<div style="position:absolute;left:0px;top:157px;width:856px;height:22px;background:#f0f1f3"></div>
<svg style="position:absolute;left:12px;top:161.00px" width="13" height="13" viewBox="0 0 13 13"><rect x="0.5" y="0.5" width="12" height="12" rx="2" fill="#fff" stroke="#767676"/></svg>
<svg style="position:absolute;left:42px;top:165.60px" width="8" height="7" viewBox="0 0 8 7"><path d="M1.2 1l5.6 5M6.8 1L1.2 6" stroke="#c42a34" stroke-width="2.1"/></svg>
<svg style="position:absolute;left:54px;top:160.50px" width="15" height="15" viewBox="0 0 15 15"><g transform="rotate(-45 7.5 7.5)"><rect x="4" y="6.25" width="12" height="2.5" fill="#eba941" stroke="#d58b26" stroke-width="0.6"/><path d="M4 5.8L0.6 7.5 4 9.2z" fill="#fbe2b0"/><path d="M1.6 6.9L0.2 7.5 1.6 8.1z" fill="#222"/></g></svg>
<div class="t" style="left:83.2px;top:161.89px;font-size:11.5px;line-height:13px;color:#333;font-weight:normal;letter-spacing:0.2px;letter-spacing:0.65px">00011</div>
<div class="t" style="left:459.3px;transform:translateX(-100%);top:161.89px;font-size:11.5px;line-height:13px;color:#333;font-weight:normal;letter-spacing:0.2px;">RAO</div>
<div class="t" style="left:479.5px;top:161.89px;font-size:11.5px;line-height:13px;color:#333;font-weight:normal;letter-spacing:0.2px;">Comprado</div>
<svg style="position:absolute;left:761px;top:160.50px" width="17" height="16" viewBox="0 0 17 16"><ellipse cx="9.5" cy="14.6" rx="5.5" ry="0.9" fill="rgba(0,0,0,0.12)"/><path d="M1.6 14.4l4.6-4.6" stroke="#8a8a8a" stroke-width="1.4"/><path d="M9.4 1.3l5.6 5.6-1.5.7-2.6 2.5.3 2.6-1.4.9L3.6 7.4l.9-1.4 2.6.3L9.6 3.7z" fill="#e23c3c" stroke="#b82424" stroke-width="0.6"/><path d="M9.3 3.2l3.6 3.6M6.5 7l2.6 2.6" stroke="#f0c060" stroke-width="0.7" opacity="0.8"/></svg>
<div class="t" style="left:794.3px;top:161.89px;font-size:11.5px;line-height:13px;color:#333;font-weight:normal;letter-spacing:0.2px;">Ativo</div>
<svg style="position:absolute;left:12px;top:183.00px" width="13" height="13" viewBox="0 0 13 13"><rect x="0.5" y="0.5" width="12" height="12" rx="2" fill="#fff" stroke="#767676"/></svg>
<svg style="position:absolute;left:42px;top:187.60px" width="8" height="7" viewBox="0 0 8 7"><path d="M1.2 1l5.6 5M6.8 1L1.2 6" stroke="#c42a34" stroke-width="2.1"/></svg>
<svg style="position:absolute;left:54px;top:182.50px" width="15" height="15" viewBox="0 0 15 15"><g transform="rotate(-45 7.5 7.5)"><rect x="4" y="6.25" width="12" height="2.5" fill="#eba941" stroke="#d58b26" stroke-width="0.6"/><path d="M4 5.8L0.6 7.5 4 9.2z" fill="#fbe2b0"/><path d="M1.6 6.9L0.2 7.5 1.6 8.1z" fill="#222"/></g></svg>
<div class="t" style="left:83.2px;top:184.27px;font-size:11.5px;line-height:13px;color:#333;font-weight:normal;letter-spacing:0.2px;letter-spacing:0.65px">00012</div>
<div class="t" style="left:459.3px;transform:translateX(-100%);top:184.27px;font-size:11.5px;line-height:13px;color:#333;font-weight:normal;letter-spacing:0.2px;">RAO</div>
<div class="t" style="left:479.5px;top:184.27px;font-size:11.5px;line-height:13px;color:#333;font-weight:normal;letter-spacing:0.2px;">Comprado</div>
<svg style="position:absolute;left:761px;top:182.50px" width="17" height="16" viewBox="0 0 17 16"><ellipse cx="9.5" cy="14.6" rx="5.5" ry="0.9" fill="rgba(0,0,0,0.12)"/><path d="M1.6 14.4l4.6-4.6" stroke="#8a8a8a" stroke-width="1.4"/><path d="M9.4 1.3l5.6 5.6-1.5.7-2.6 2.5.3 2.6-1.4.9L3.6 7.4l.9-1.4 2.6.3L9.6 3.7z" fill="#e23c3c" stroke="#b82424" stroke-width="0.6"/><path d="M9.3 3.2l3.6 3.6M6.5 7l2.6 2.6" stroke="#f0c060" stroke-width="0.7" opacity="0.8"/></svg>
<div class="t" style="left:794.3px;top:184.27px;font-size:11.5px;line-height:13px;color:#333;font-weight:normal;letter-spacing:0.2px;">Ativo</div>
<div style="position:absolute;left:0px;top:201px;width:856px;height:23px;background:#f0f1f3"></div>
<svg style="position:absolute;left:12px;top:205.00px" width="13" height="13" viewBox="0 0 13 13"><rect x="0.5" y="0.5" width="12" height="12" rx="2" fill="#fff" stroke="#767676"/></svg>
<svg style="position:absolute;left:42px;top:209.60px" width="8" height="7" viewBox="0 0 8 7"><path d="M1.2 1l5.6 5M6.8 1L1.2 6" stroke="#c42a34" stroke-width="2.1"/></svg>
<svg style="position:absolute;left:54px;top:204.50px" width="15" height="15" viewBox="0 0 15 15"><g transform="rotate(-45 7.5 7.5)"><rect x="4" y="6.25" width="12" height="2.5" fill="#eba941" stroke="#d58b26" stroke-width="0.6"/><path d="M4 5.8L0.6 7.5 4 9.2z" fill="#fbe2b0"/><path d="M1.6 6.9L0.2 7.5 1.6 8.1z" fill="#222"/></g></svg>
<div class="t" style="left:83.2px;top:206.64px;font-size:11.5px;line-height:13px;color:#333;font-weight:normal;letter-spacing:0.2px;letter-spacing:0.65px">00013</div>
<div class="t" style="left:459.3px;transform:translateX(-100%);top:206.64px;font-size:11.5px;line-height:13px;color:#333;font-weight:normal;letter-spacing:0.2px;">RAO</div>
<div class="t" style="left:479.5px;top:206.64px;font-size:11.5px;line-height:13px;color:#333;font-weight:normal;letter-spacing:0.2px;">Comprado</div>
<div class="t" style="left:752.3px;transform:translateX(-100%);top:206.64px;font-size:11.5px;line-height:13px;color:#333;font-weight:normal;letter-spacing:0.2px;letter-spacing:0.5px">0,77/un</div>
<div class="t" style="left:794.3px;top:206.64px;font-size:11.5px;line-height:13px;color:#333;font-weight:normal;letter-spacing:0.2px;">Ativo</div>
<svg style="position:absolute;left:12px;top:228.00px" width="13" height="13" viewBox="0 0 13 13"><rect x="0.5" y="0.5" width="12" height="12" rx="2" fill="#fff" stroke="#767676"/></svg>
<svg style="position:absolute;left:42px;top:232.60px" width="8" height="7" viewBox="0 0 8 7"><path d="M1.2 1l5.6 5M6.8 1L1.2 6" stroke="#c42a34" stroke-width="2.1"/></svg>
<svg style="position:absolute;left:54px;top:227.50px" width="15" height="15" viewBox="0 0 15 15"><g transform="rotate(-45 7.5 7.5)"><rect x="4" y="6.25" width="12" height="2.5" fill="#eba941" stroke="#d58b26" stroke-width="0.6"/><path d="M4 5.8L0.6 7.5 4 9.2z" fill="#fbe2b0"/><path d="M1.6 6.9L0.2 7.5 1.6 8.1z" fill="#222"/></g></svg>
<div class="t" style="left:83.2px;top:229.02px;font-size:11.5px;line-height:13px;color:#333;font-weight:normal;letter-spacing:0.2px;letter-spacing:0.65px">00014</div>
<div class="t" style="left:459.3px;transform:translateX(-100%);top:229.02px;font-size:11.5px;line-height:13px;color:#333;font-weight:normal;letter-spacing:0.2px;">RAO</div>
<div class="t" style="left:479.5px;top:229.02px;font-size:11.5px;line-height:13px;color:#333;font-weight:normal;letter-spacing:0.2px;">Comprado</div>
<svg style="position:absolute;left:761px;top:227.50px" width="17" height="16" viewBox="0 0 17 16"><ellipse cx="9.5" cy="14.6" rx="5.5" ry="0.9" fill="rgba(0,0,0,0.12)"/><path d="M1.6 14.4l4.6-4.6" stroke="#8a8a8a" stroke-width="1.4"/><path d="M9.4 1.3l5.6 5.6-1.5.7-2.6 2.5.3 2.6-1.4.9L3.6 7.4l.9-1.4 2.6.3L9.6 3.7z" fill="#e23c3c" stroke="#b82424" stroke-width="0.6"/><path d="M9.3 3.2l3.6 3.6M6.5 7l2.6 2.6" stroke="#f0c060" stroke-width="0.7" opacity="0.8"/></svg>
<div class="t" style="left:794.3px;top:229.02px;font-size:11.5px;line-height:13px;color:#333;font-weight:normal;letter-spacing:0.2px;">Ativo</div>
<div style="position:absolute;left:0px;top:246px;width:856px;height:22px;background:#f4b915"></div>
<svg style="position:absolute;left:12px;top:250.00px" width="13" height="13" viewBox="0 0 13 13"><rect x="0.5" y="0.5" width="12" height="12" rx="2" fill="#fff" stroke="#767676"/></svg>
<svg style="position:absolute;left:42px;top:254.60px" width="8" height="7" viewBox="0 0 8 7"><path d="M1.2 1l5.6 5M6.8 1L1.2 6" stroke="#c42a34" stroke-width="2.1"/></svg>
<svg style="position:absolute;left:54px;top:249.50px" width="15" height="15" viewBox="0 0 15 15"><g transform="rotate(-45 7.5 7.5)"><rect x="4" y="6.25" width="12" height="2.5" fill="#eba941" stroke="#d58b26" stroke-width="0.6"/><path d="M4 5.8L0.6 7.5 4 9.2z" fill="#fbe2b0"/><path d="M1.6 6.9L0.2 7.5 1.6 8.1z" fill="#222"/></g></svg>
<div class="t" style="left:83.2px;top:251.39px;font-size:11.5px;line-height:13px;color:#333;font-weight:normal;letter-spacing:0.2px;letter-spacing:0.65px">00015</div>
<div class="t" style="left:479.5px;top:251.39px;font-size:11.5px;line-height:13px;color:#333;font-weight:normal;letter-spacing:0.2px;">Fabricado</div>
<div class="t" style="left:752.3px;transform:translateX(-100%);top:251.39px;font-size:11.5px;line-height:13px;color:#333;font-weight:normal;letter-spacing:0.2px;letter-spacing:0.5px">180,00/un</div>
<div class="t" style="left:794.3px;top:251.39px;font-size:11.5px;line-height:13px;color:#333;font-weight:normal;letter-spacing:0.2px;">Ativo</div>
<svg style="position:absolute;left:12px;top:272.00px" width="13" height="13" viewBox="0 0 13 13"><rect x="0.5" y="0.5" width="12" height="12" rx="2" fill="#fff" stroke="#767676"/></svg>
<svg style="position:absolute;left:42px;top:276.60px" width="8" height="7" viewBox="0 0 8 7"><path d="M1.2 1l5.6 5M6.8 1L1.2 6" stroke="#c42a34" stroke-width="2.1"/></svg>
<svg style="position:absolute;left:54px;top:271.50px" width="15" height="15" viewBox="0 0 15 15"><g transform="rotate(-45 7.5 7.5)"><rect x="4" y="6.25" width="12" height="2.5" fill="#eba941" stroke="#d58b26" stroke-width="0.6"/><path d="M4 5.8L0.6 7.5 4 9.2z" fill="#fbe2b0"/><path d="M1.6 6.9L0.2 7.5 1.6 8.1z" fill="#222"/></g></svg>
<div class="t" style="left:83.2px;top:273.77px;font-size:11.5px;line-height:13px;color:#333;font-weight:normal;letter-spacing:0.2px;letter-spacing:0.65px">00016</div>
<div class="t" style="left:459.3px;transform:translateX(-100%);top:273.77px;font-size:11.5px;line-height:13px;color:#333;font-weight:normal;letter-spacing:0.2px;">RAO</div>
<div class="t" style="left:479.5px;top:273.77px;font-size:11.5px;line-height:13px;color:#333;font-weight:normal;letter-spacing:0.2px;">Comprado</div>
<svg style="position:absolute;left:761px;top:271.50px" width="17" height="16" viewBox="0 0 17 16"><ellipse cx="9.5" cy="14.6" rx="5.5" ry="0.9" fill="rgba(0,0,0,0.12)"/><path d="M1.6 14.4l4.6-4.6" stroke="#8a8a8a" stroke-width="1.4"/><path d="M9.4 1.3l5.6 5.6-1.5.7-2.6 2.5.3 2.6-1.4.9L3.6 7.4l.9-1.4 2.6.3L9.6 3.7z" fill="#e23c3c" stroke="#b82424" stroke-width="0.6"/><path d="M9.3 3.2l3.6 3.6M6.5 7l2.6 2.6" stroke="#f0c060" stroke-width="0.7" opacity="0.8"/></svg>
<div class="t" style="left:794.3px;top:273.77px;font-size:11.5px;line-height:13px;color:#333;font-weight:normal;letter-spacing:0.2px;">Ativo</div>
<div style="position:absolute;left:0px;top:291px;width:856px;height:22px;background:#f0f1f3"></div>
<svg style="position:absolute;left:12px;top:295.00px" width="13" height="13" viewBox="0 0 13 13"><rect x="0.5" y="0.5" width="12" height="12" rx="2" fill="#fff" stroke="#767676"/></svg>
<svg style="position:absolute;left:42px;top:299.60px" width="8" height="7" viewBox="0 0 8 7"><path d="M1.2 1l5.6 5M6.8 1L1.2 6" stroke="#c42a34" stroke-width="2.1"/></svg>
<svg style="position:absolute;left:54px;top:294.50px" width="15" height="15" viewBox="0 0 15 15"><g transform="rotate(-45 7.5 7.5)"><rect x="4" y="6.25" width="12" height="2.5" fill="#eba941" stroke="#d58b26" stroke-width="0.6"/><path d="M4 5.8L0.6 7.5 4 9.2z" fill="#fbe2b0"/><path d="M1.6 6.9L0.2 7.5 1.6 8.1z" fill="#222"/></g></svg>
<div class="t" style="left:83.2px;top:296.14px;font-size:11.5px;line-height:13px;color:#333;font-weight:normal;letter-spacing:0.2px;letter-spacing:0.65px">00020</div>
<div class="t" style="left:459.3px;transform:translateX(-100%);top:296.14px;font-size:11.5px;line-height:13px;color:#333;font-weight:normal;letter-spacing:0.2px;">SS...</div>
<div class="t" style="left:479.5px;top:296.14px;font-size:11.5px;line-height:13px;color:#333;font-weight:normal;letter-spacing:0.2px;">Comprado</div>
<div class="t" style="left:794.3px;top:296.14px;font-size:11.5px;line-height:13px;color:#333;font-weight:normal;letter-spacing:0.2px;">Ativo</div>
<svg style="position:absolute;left:12px;top:317.00px" width="13" height="13" viewBox="0 0 13 13"><rect x="0.5" y="0.5" width="12" height="12" rx="2" fill="#fff" stroke="#767676"/></svg>
<svg style="position:absolute;left:42px;top:321.60px" width="8" height="7" viewBox="0 0 8 7"><path d="M1.2 1l5.6 5M6.8 1L1.2 6" stroke="#c42a34" stroke-width="2.1"/></svg>
<svg style="position:absolute;left:54px;top:316.50px" width="15" height="15" viewBox="0 0 15 15"><g transform="rotate(-45 7.5 7.5)"><rect x="4" y="6.25" width="12" height="2.5" fill="#eba941" stroke="#d58b26" stroke-width="0.6"/><path d="M4 5.8L0.6 7.5 4 9.2z" fill="#fbe2b0"/><path d="M1.6 6.9L0.2 7.5 1.6 8.1z" fill="#222"/></g></svg>
<div class="t" style="left:83.2px;top:318.52px;font-size:11.5px;line-height:13px;color:#333;font-weight:normal;letter-spacing:0.2px;letter-spacing:0.65px">00021</div>
<div class="t" style="left:459.3px;transform:translateX(-100%);top:318.52px;font-size:11.5px;line-height:13px;color:#333;font-weight:normal;letter-spacing:0.2px;">S...</div>
<div class="t" style="left:479.5px;top:318.52px;font-size:11.5px;line-height:13px;color:#333;font-weight:normal;letter-spacing:0.2px;">Comprado</div>
<div class="t" style="left:794.3px;top:318.52px;font-size:11.5px;line-height:13px;color:#333;font-weight:normal;letter-spacing:0.2px;">Ativo</div>
<div style="position:absolute;left:0px;top:336px;width:856px;height:22px;background:#f0f1f3"></div>
<svg style="position:absolute;left:12px;top:340.00px" width="13" height="13" viewBox="0 0 13 13"><rect x="0.5" y="0.5" width="12" height="12" rx="2" fill="#fff" stroke="#767676"/></svg>
<svg style="position:absolute;left:42px;top:344.60px" width="8" height="7" viewBox="0 0 8 7"><path d="M1.2 1l5.6 5M6.8 1L1.2 6" stroke="#c42a34" stroke-width="2.1"/></svg>
<svg style="position:absolute;left:54px;top:339.50px" width="15" height="15" viewBox="0 0 15 15"><g transform="rotate(-45 7.5 7.5)"><rect x="4" y="6.25" width="12" height="2.5" fill="#eba941" stroke="#d58b26" stroke-width="0.6"/><path d="M4 5.8L0.6 7.5 4 9.2z" fill="#fbe2b0"/><path d="M1.6 6.9L0.2 7.5 1.6 8.1z" fill="#222"/></g></svg>
<div class="t" style="left:83.2px;top:340.89px;font-size:11.5px;line-height:13px;color:#333;font-weight:normal;letter-spacing:0.2px;letter-spacing:0.65px">00022</div>
<div class="t" style="left:459.3px;transform:translateX(-100%);top:340.89px;font-size:11.5px;line-height:13px;color:#333;font-weight:normal;letter-spacing:0.2px;">SS...</div>
<div class="t" style="left:479.5px;top:340.89px;font-size:11.5px;line-height:13px;color:#333;font-weight:normal;letter-spacing:0.2px;">Comprado</div>
<div class="t" style="left:794.3px;top:340.89px;font-size:11.5px;line-height:13px;color:#333;font-weight:normal;letter-spacing:0.2px;">Ativo</div>
<svg style="position:absolute;left:12px;top:362.00px" width="13" height="13" viewBox="0 0 13 13"><rect x="0.5" y="0.5" width="12" height="12" rx="2" fill="#fff" stroke="#767676"/></svg>
<svg style="position:absolute;left:42px;top:366.60px" width="8" height="7" viewBox="0 0 8 7"><path d="M1.2 1l5.6 5M6.8 1L1.2 6" stroke="#c42a34" stroke-width="2.1"/></svg>
<svg style="position:absolute;left:54px;top:361.50px" width="15" height="15" viewBox="0 0 15 15"><g transform="rotate(-45 7.5 7.5)"><rect x="4" y="6.25" width="12" height="2.5" fill="#eba941" stroke="#d58b26" stroke-width="0.6"/><path d="M4 5.8L0.6 7.5 4 9.2z" fill="#fbe2b0"/><path d="M1.6 6.9L0.2 7.5 1.6 8.1z" fill="#222"/></g></svg>
<div class="t" style="left:83.2px;top:363.27px;font-size:11.5px;line-height:13px;color:#333;font-weight:normal;letter-spacing:0.2px;letter-spacing:0.65px">00023</div>
<div class="t" style="left:459.3px;transform:translateX(-100%);top:363.27px;font-size:11.5px;line-height:13px;color:#333;font-weight:normal;letter-spacing:0.2px;">RAO</div>
<div class="t" style="left:479.5px;top:363.27px;font-size:11.5px;line-height:13px;color:#333;font-weight:normal;letter-spacing:0.2px;">Comprado</div>
<svg style="position:absolute;left:761px;top:361.50px" width="17" height="16" viewBox="0 0 17 16"><ellipse cx="9.5" cy="14.6" rx="5.5" ry="0.9" fill="rgba(0,0,0,0.12)"/><path d="M1.6 14.4l4.6-4.6" stroke="#8a8a8a" stroke-width="1.4"/><path d="M9.4 1.3l5.6 5.6-1.5.7-2.6 2.5.3 2.6-1.4.9L3.6 7.4l.9-1.4 2.6.3L9.6 3.7z" fill="#e23c3c" stroke="#b82424" stroke-width="0.6"/><path d="M9.3 3.2l3.6 3.6M6.5 7l2.6 2.6" stroke="#f0c060" stroke-width="0.7" opacity="0.8"/></svg>
<div class="t" style="left:794.3px;top:363.27px;font-size:11.5px;line-height:13px;color:#333;font-weight:normal;letter-spacing:0.2px;">Ativo</div>
<div style="position:absolute;left:0px;top:380px;width:856px;height:23px;background:#f0f1f3"></div>
<svg style="position:absolute;left:12px;top:384.00px" width="13" height="13" viewBox="0 0 13 13"><rect x="0.5" y="0.5" width="12" height="12" rx="2" fill="#fff" stroke="#767676"/></svg>
<svg style="position:absolute;left:42px;top:388.60px" width="8" height="7" viewBox="0 0 8 7"><path d="M1.2 1l5.6 5M6.8 1L1.2 6" stroke="#c42a34" stroke-width="2.1"/></svg>
<svg style="position:absolute;left:54px;top:383.50px" width="15" height="15" viewBox="0 0 15 15"><g transform="rotate(-45 7.5 7.5)"><rect x="4" y="6.25" width="12" height="2.5" fill="#eba941" stroke="#d58b26" stroke-width="0.6"/><path d="M4 5.8L0.6 7.5 4 9.2z" fill="#fbe2b0"/><path d="M1.6 6.9L0.2 7.5 1.6 8.1z" fill="#222"/></g></svg>
<div class="t" style="left:83.2px;top:385.64px;font-size:11.5px;line-height:13px;color:#333;font-weight:normal;letter-spacing:0.2px;letter-spacing:0.65px">00024</div>
<div class="t" style="left:459.3px;transform:translateX(-100%);top:385.64px;font-size:11.5px;line-height:13px;color:#333;font-weight:normal;letter-spacing:0.2px;">RAO</div>
<div class="t" style="left:479.5px;top:385.64px;font-size:11.5px;line-height:13px;color:#333;font-weight:normal;letter-spacing:0.2px;">Comprado</div>
<svg style="position:absolute;left:761px;top:383.50px" width="17" height="16" viewBox="0 0 17 16"><ellipse cx="9.5" cy="14.6" rx="5.5" ry="0.9" fill="rgba(0,0,0,0.12)"/><path d="M1.6 14.4l4.6-4.6" stroke="#8a8a8a" stroke-width="1.4"/><path d="M9.4 1.3l5.6 5.6-1.5.7-2.6 2.5.3 2.6-1.4.9L3.6 7.4l.9-1.4 2.6.3L9.6 3.7z" fill="#e23c3c" stroke="#b82424" stroke-width="0.6"/><path d="M9.3 3.2l3.6 3.6M6.5 7l2.6 2.6" stroke="#f0c060" stroke-width="0.7" opacity="0.8"/></svg>
<div class="t" style="left:794.3px;top:385.64px;font-size:11.5px;line-height:13px;color:#333;font-weight:normal;letter-spacing:0.2px;">Ativo</div>
<svg style="position:absolute;left:12px;top:407.00px" width="13" height="13" viewBox="0 0 13 13"><rect x="0.5" y="0.5" width="12" height="12" rx="2" fill="#fff" stroke="#767676"/></svg>
<svg style="position:absolute;left:42px;top:411.60px" width="8" height="7" viewBox="0 0 8 7"><path d="M1.2 1l5.6 5M6.8 1L1.2 6" stroke="#c42a34" stroke-width="2.1"/></svg>
<svg style="position:absolute;left:54px;top:406.50px" width="15" height="15" viewBox="0 0 15 15"><g transform="rotate(-45 7.5 7.5)"><rect x="4" y="6.25" width="12" height="2.5" fill="#eba941" stroke="#d58b26" stroke-width="0.6"/><path d="M4 5.8L0.6 7.5 4 9.2z" fill="#fbe2b0"/><path d="M1.6 6.9L0.2 7.5 1.6 8.1z" fill="#222"/></g></svg>
<div class="t" style="left:83.2px;top:408.02px;font-size:11.5px;line-height:13px;color:#333;font-weight:normal;letter-spacing:0.2px;letter-spacing:0.65px">00027</div>
<div class="t" style="left:479.5px;top:408.02px;font-size:11.5px;line-height:13px;color:#333;font-weight:normal;letter-spacing:0.2px;">Comprado</div>
<div class="t" style="left:794.3px;top:408.02px;font-size:11.5px;line-height:13px;color:#333;font-weight:normal;letter-spacing:0.2px;">Ativo</div>
<div style="position:absolute;left:0px;top:425px;width:856px;height:22px;background:#f0f1f3"></div>
<svg style="position:absolute;left:12px;top:429.00px" width="13" height="13" viewBox="0 0 13 13"><rect x="0.5" y="0.5" width="12" height="12" rx="2" fill="#fff" stroke="#767676"/></svg>
<svg style="position:absolute;left:42px;top:433.60px" width="8" height="7" viewBox="0 0 8 7"><path d="M1.2 1l5.6 5M6.8 1L1.2 6" stroke="#c42a34" stroke-width="2.1"/></svg>
<svg style="position:absolute;left:54px;top:428.50px" width="15" height="15" viewBox="0 0 15 15"><g transform="rotate(-45 7.5 7.5)"><rect x="4" y="6.25" width="12" height="2.5" fill="#eba941" stroke="#d58b26" stroke-width="0.6"/><path d="M4 5.8L0.6 7.5 4 9.2z" fill="#fbe2b0"/><path d="M1.6 6.9L0.2 7.5 1.6 8.1z" fill="#222"/></g></svg>
<div class="t" style="left:83.2px;top:430.39px;font-size:11.5px;line-height:13px;color:#333;font-weight:normal;letter-spacing:0.2px;letter-spacing:0.65px">00028</div>
<div class="t" style="left:479.5px;top:430.39px;font-size:11.5px;line-height:13px;color:#333;font-weight:normal;letter-spacing:0.2px;">Comprado</div>
<div class="t" style="left:794.3px;top:430.39px;font-size:11.5px;line-height:13px;color:#333;font-weight:normal;letter-spacing:0.2px;">Ativo</div>
<div style="position:absolute;left:38px;top:0px;width:1px;height:437px;background:#d5d8dc"></div>
<div style="position:absolute;left:76px;top:0px;width:1px;height:437px;background:#d5d8dc"></div>
<div style="position:absolute;left:471px;top:0px;width:1px;height:437px;background:#d5d8dc"></div>
<div style="position:absolute;left:586px;top:0px;width:1px;height:437px;background:#d5d8dc"></div>
<div style="position:absolute;left:686px;top:0px;width:1px;height:437px;background:#d5d8dc"></div>
<div style="position:absolute;left:786px;top:0px;width:1px;height:437px;background:#d5d8dc"></div>
<div style="position:absolute;left:1313px;top:1px;width:16px;height:435px;background:#f0f0f0"></div>
<div style="position:absolute;left:1314px;top:17px;width:13px;height:156px;background:#c1c1c1"></div>
<div style="position:absolute;left:1317px;top:6px;width:0;height:0;border-left:4px solid transparent;border-right:4px solid transparent;border-bottom:4px solid #a3a3a3"></div>
<div style="position:absolute;left:1317px;top:424px;width:0;height:0;border-left:4.0px solid transparent;border-right:4.0px solid transparent;border-top:4px solid #505050"></div>
</div>
<div style="position:absolute;left:0px;top:691px;width:1343px;height:1px;background:#8a8f96"></div>
<div style="position:absolute;left:0px;top:692px;width:1343px;height:1px;background:#5b88b2"></div>
<div style="position:absolute;left:0px;top:693px;width:1343px;height:6px;background:linear-gradient(90deg,#d6dcec,#d2e0ef 50%,#cee3ef)"></div>
<div style="position:absolute;left:144px;top:119px;width:300px;height:574px;background:#263a50;box-shadow:1px 1px 3px rgba(0,0,0,0.25)"></div>
<div class="t" style="left:148.2px;top:122.82px;font-size:11.5px;line-height:13px;color:#fff;font-weight:normal;letter-spacing:0.2px;letter-spacing:0.25px">Estoque</div>
<div class="t" style="left:434.8px;transform:translateX(-100%);top:122.82px;font-size:11.5px;line-height:13px;color:#fff;font-weight:normal;letter-spacing:0.2px;letter-spacing:0.58px">Alt+Q</div>
<div class="t" style="left:148.2px;top:141.82px;font-size:11.5px;line-height:13px;color:#fff;font-weight:normal;letter-spacing:0.2px;letter-spacing:0.25px">Ficha de estoque</div>
<div class="t" style="left:434.8px;transform:translateX(-100%);top:141.82px;font-size:11.5px;line-height:13px;color:#fff;font-weight:normal;letter-spacing:0.2px;letter-spacing:0.58px">Ctrl+Q</div>
<div class="t" style="left:148.2px;top:160.82px;font-size:11.5px;line-height:13px;color:#fff;font-weight:normal;letter-spacing:0.2px;letter-spacing:0.25px">Movimentações de estoque</div>
<div class="t" style="left:434.8px;transform:translateX(-100%);top:160.82px;font-size:11.5px;line-height:13px;color:#fff;font-weight:normal;letter-spacing:0.2px;letter-spacing:0.58px">Alt+M</div>
<div class="t" style="left:148.2px;top:179.82px;font-size:11.5px;line-height:13px;color:#fff;font-weight:normal;letter-spacing:0.2px;letter-spacing:0.25px">Lotes registrados</div>
<div style="position:absolute;left:144px;top:196px;width:300px;height:1px;background:#c9cdd2"></div>
<div class="t" style="left:148.2px;top:202.82px;font-size:11.5px;line-height:13px;color:#fff;font-weight:normal;letter-spacing:0.2px;letter-spacing:0.25px">Roteiro do item</div>
<div class="t" style="left:434.8px;transform:translateX(-100%);top:202.82px;font-size:11.5px;line-height:13px;color:#fff;font-weight:normal;letter-spacing:0.2px;letter-spacing:0.58px">Ctrl+R</div>
<div class="t" style="left:148.2px;top:221.82px;font-size:11.5px;line-height:13px;color:#fff;font-weight:normal;letter-spacing:0.2px;letter-spacing:0.25px">Estrutura de produto</div>
<div class="t" style="left:434.8px;transform:translateX(-100%);top:221.82px;font-size:11.5px;line-height:13px;color:#fff;font-weight:normal;letter-spacing:0.2px;letter-spacing:0.58px">Ctrl+I</div>
<div class="t" style="left:148.2px;top:240.82px;font-size:11.5px;line-height:13px;color:#fff;font-weight:normal;letter-spacing:0.2px;letter-spacing:0.25px">Estrutura multinível</div>
<div class="t" style="left:434.8px;transform:translateX(-100%);top:240.82px;font-size:11.5px;line-height:13px;color:#fff;font-weight:normal;letter-spacing:0.2px;letter-spacing:0.58px">Alt+Y</div>
<div class="t" style="left:148.2px;top:259.82px;font-size:11.5px;line-height:13px;color:#fff;font-weight:normal;letter-spacing:0.2px;letter-spacing:0.25px">Itens-pai</div>
<div class="t" style="left:434.8px;transform:translateX(-100%);top:259.82px;font-size:11.5px;line-height:13px;color:#fff;font-weight:normal;letter-spacing:0.2px;letter-spacing:0.58px">Ctrl+Shift+I</div>
<div class="t" style="left:148.2px;top:278.82px;font-size:11.5px;line-height:13px;color:#fff;font-weight:normal;letter-spacing:0.2px;letter-spacing:0.25px">Grafo das estruturas do item</div>
<div class="t" style="left:148.2px;top:297.82px;font-size:11.5px;line-height:13px;color:#fff;font-weight:normal;letter-spacing:0.2px;letter-spacing:0.25px">Aparas do item</div>
<div class="t" style="left:148.2px;top:316.82px;font-size:11.5px;line-height:13px;color:#fff;font-weight:normal;letter-spacing:0.2px;letter-spacing:0.25px">Expressões de parâmetros do grupo-pai</div>
<div class="t" style="left:148.2px;top:335.82px;font-size:11.5px;line-height:13px;color:#fff;font-weight:normal;letter-spacing:0.2px;letter-spacing:0.25px">Expressões de parâmetros do grupo-filho</div>
<div style="position:absolute;left:144px;top:352px;width:300px;height:1px;background:#c9cdd2"></div>
<div class="t" style="left:148.2px;top:358.82px;font-size:11.5px;line-height:13px;color:#fff;font-weight:normal;letter-spacing:0.2px;letter-spacing:0.25px">Últimas notas fiscais</div>
<div class="t" style="left:148.2px;top:377.82px;font-size:11.5px;line-height:13px;color:#fff;font-weight:normal;letter-spacing:0.2px;letter-spacing:0.25px">Últimos pedidos de venda</div>
<div class="t" style="left:434.8px;transform:translateX(-100%);top:377.82px;font-size:11.5px;line-height:13px;color:#fff;font-weight:normal;letter-spacing:0.2px;letter-spacing:0.58px">Alt+Shift+V</div>
<div class="t" style="left:148.2px;top:396.82px;font-size:11.5px;line-height:13px;color:#fff;font-weight:normal;letter-spacing:0.2px;letter-spacing:0.25px">Últimas propostas de venda</div>
<div class="t" style="left:434.8px;transform:translateX(-100%);top:396.82px;font-size:11.5px;line-height:13px;color:#fff;font-weight:normal;letter-spacing:0.2px;letter-spacing:0.58px">Alt+Shift+W</div>
<div style="position:absolute;left:144px;top:413px;width:300px;height:1px;background:#c9cdd2"></div>
<div class="t" style="left:148.2px;top:419.82px;font-size:11.5px;line-height:13px;color:#fff;font-weight:normal;letter-spacing:0.2px;letter-spacing:0.25px">Histórico do preço de venda</div>
<div class="t" style="left:148.2px;top:438.82px;font-size:11.5px;line-height:13px;color:#fff;font-weight:normal;letter-spacing:0.2px;letter-spacing:0.25px">Tabelas de preços do item</div>
<div style="position:absolute;left:144px;top:455px;width:300px;height:1px;background:#c9cdd2"></div>
<div class="t" style="left:148.2px;top:461.82px;font-size:11.5px;line-height:13px;color:#fff;font-weight:normal;letter-spacing:0.2px;letter-spacing:0.25px">Últimas notas fiscais recebidas</div>
<div class="t" style="left:434.8px;transform:translateX(-100%);top:461.82px;font-size:11.5px;line-height:13px;color:#fff;font-weight:normal;letter-spacing:0.2px;letter-spacing:0.58px">Alt+Shift+E</div>
<div class="t" style="left:148.2px;top:480.82px;font-size:11.5px;line-height:13px;color:#fff;font-weight:normal;letter-spacing:0.2px;letter-spacing:0.25px">Últimos pedidos de compra</div>
<div class="t" style="left:434.8px;transform:translateX(-100%);top:480.82px;font-size:11.5px;line-height:13px;color:#fff;font-weight:normal;letter-spacing:0.2px;letter-spacing:0.58px">Alt+Shift+C</div>
<div class="t" style="left:148.2px;top:499.82px;font-size:11.5px;line-height:13px;color:#fff;font-weight:normal;letter-spacing:0.2px;letter-spacing:0.25px">Últimas cotações de compra</div>
<div class="t" style="left:148.2px;top:518.82px;font-size:11.5px;line-height:13px;color:#fff;font-weight:normal;letter-spacing:0.2px;letter-spacing:0.25px">Solicitações de compra</div>
<div class="t" style="left:434.8px;transform:translateX(-100%);top:518.82px;font-size:11.5px;line-height:13px;color:#fff;font-weight:normal;letter-spacing:0.2px;letter-spacing:0.58px">Alt+S</div>
<div class="t" style="left:148.2px;top:537.82px;font-size:11.5px;line-height:13px;color:#fff;font-weight:normal;letter-spacing:0.2px;letter-spacing:0.25px">Solicitações de recebimento para terceirização</div>
<div class="t" style="left:148.2px;top:556.82px;font-size:11.5px;line-height:13px;color:#fff;font-weight:normal;letter-spacing:0.2px;letter-spacing:0.25px">Solicitações de envio para terceirização</div>
<div style="position:absolute;left:144px;top:573px;width:300px;height:1px;background:#c9cdd2"></div>
<div style="position:absolute;left:144px;top:575.8px;width:300px;height:19.8px;background:#1f2e40"></div>
<div style="position:absolute;left:444px;top:570px;width:1px;height:27px;background:#c9cdd2"></div>
<div class="t" style="left:148.2px;top:579.82px;font-size:11.5px;line-height:13px;color:#fff;font-weight:normal;letter-spacing:0.2px;letter-spacing:0.25px">Histórico do custo de aquisição</div>
<div style="position:absolute;left:144px;top:596px;width:300px;height:1px;background:#c9cdd2"></div>
<div class="t" style="left:148.2px;top:602.82px;font-size:11.5px;line-height:13px;color:#fff;font-weight:normal;letter-spacing:0.2px;letter-spacing:0.25px">Ordens de produção</div>
<div class="t" style="left:434.8px;transform:translateX(-100%);top:602.82px;font-size:11.5px;line-height:13px;color:#fff;font-weight:normal;letter-spacing:0.2px;letter-spacing:0.58px">Alt+O</div>
<div class="t" style="left:148.2px;top:621.82px;font-size:11.5px;line-height:13px;color:#fff;font-weight:normal;letter-spacing:0.2px;letter-spacing:0.25px">Ficha futura</div>
<div class="t" style="left:434.8px;transform:translateX(-100%);top:621.82px;font-size:11.5px;line-height:13px;color:#fff;font-weight:normal;letter-spacing:0.2px;letter-spacing:0.58px">Ctrl+U</div>
<div class="t" style="left:148.2px;top:640.82px;font-size:11.5px;line-height:13px;color:#fff;font-weight:normal;letter-spacing:0.2px;letter-spacing:0.25px">Reservas</div>
<div class="t" style="left:434.8px;transform:translateX(-100%);top:640.82px;font-size:11.5px;line-height:13px;color:#fff;font-weight:normal;letter-spacing:0.2px;letter-spacing:0.58px">Alt+J</div>
<div class="t" style="left:148.2px;top:659.82px;font-size:11.5px;line-height:13px;color:#fff;font-weight:normal;letter-spacing:0.2px;letter-spacing:0.25px">Vínculos</div>
<div style="position:absolute;left:144px;top:676px;width:300px;height:1px;background:#c9cdd2"></div>
<div class="t" style="left:148.2px;top:682.82px;font-size:11.5px;line-height:13px;color:#fff;font-weight:normal;letter-spacing:0.2px;letter-spacing:0.25px">Fornecedores do item</div>
<div style="position:absolute;left:139px;top:96px;width:84px;height:26px;border:3px solid #ff0000;border-radius:2px;box-sizing:border-box"></div>
<div style="position:absolute;left:137px;top:567px;width:312px;height:34px;border:3px solid #ff0000;border-radius:3px;box-sizing:border-box"></div>
</body></html>
